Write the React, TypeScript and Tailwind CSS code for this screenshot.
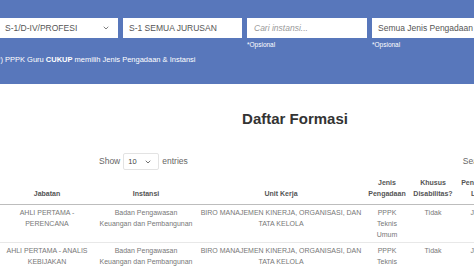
import { ChevronDown } from 'lucide-react'

const rows = [
  {
    jabatan: ['AHLI PERTAMA -', 'PERENCANA'],
    instansi: ['Badan Pengawasan', 'Keuangan dan Pembangunan'],
    unit: ['BIRO MANAJEMEN KINERJA, ORGANISASI, DAN', 'TATA KELOLA'],
    jenis: ['PPPK', 'Teknis', 'Umum'],
    khusus: 'Tidak',
    lokasi: 'Jakarta',
  },
  {
    jabatan: ['AHLI PERTAMA - ANALIS', 'KEBIJAKAN'],
    instansi: ['Badan Pengawasan', 'Keuangan dan Pembangunan'],
    unit: ['BIRO MANAJEMEN KINERJA, ORGANISASI, DAN', 'TATA KELOLA'],
    jenis: ['PPPK', 'Teknis', 'Umum'],
    khusus: 'Tidak',
    lokasi: 'Jakarta',
  },
]

function Lines({ items }: { items: string[] }) {
  return (
    <>
      {items.map((t, i) => (
        <div key={i} className="whitespace-nowrap">{t}</div>
      ))}
    </>
  )
}

export default function App() {
  return (
    <div className="w-[474px] h-[266px] overflow-hidden bg-white font-['Liberation_Sans',Arial,sans-serif]">
      {/* Filter band */}
      <div className="h-[84px] bg-[#5877bb] pt-[18px]">
        <div className="flex gap-[5px] ml-[-2px]">
          <div className="w-[120px] shrink-0">
            <div className="h-[20px] bg-white flex items-center justify-between pl-[7px] pr-[8px] text-[8.5px] text-[#555]">
              <span>S-1/D-IV/PROFESI</span>
              <ChevronDown className="w-[8px] h-[8px] text-[#666]" strokeWidth={2.5} />
            </div>
          </div>
          <div className="w-[119px] shrink-0">
            <div className="h-[20px] bg-white flex items-center pl-[6px] text-[8.5px] text-[#555]">
              S-1 SEMUA JURUSAN
            </div>
          </div>
          <div className="w-[120px] shrink-0">
            <div className="h-[20px] bg-white flex items-center pl-[7px] text-[8.5px] italic text-[#999]">
              Cari instansi...
            </div>
            <div className="text-[6.5px] leading-[11px] text-white mt-[1px]">*Opsional</div>
          </div>
          <div className="w-[120px] shrink-0">
            <div className="h-[20px] bg-white flex items-center pl-[6px] text-[8.5px] text-[#555] whitespace-nowrap">
              Semua Jenis Pengadaan
            </div>
            <div className="text-[6.5px] leading-[11px] text-white mt-[1px]">*Opsional</div>
          </div>
        </div>
        <div className="mt-[4px] ml-[-5px] text-[7.5px] leading-[11px] text-white whitespace-nowrap">
          (*) PPPK Guru <b>CUKUP</b> memilih Jenis Pengadaan &amp; Instansi
        </div>
      </div>

      <div className="w-[590px]">
        <h1 className="mt-[26px] text-center text-[15px] leading-[18px] font-bold text-[#333]">Daftar Formasi</h1>

        {/* Length + search */}
        <div className="mt-[25px] flex items-center h-[17px] text-[8.5px] text-[#666]">
          <span className="ml-[99px]">Show</span>
          <div className="ml-[3px] w-[36px] h-[17px] border border-[#e3e3e3] rounded-[2px] flex items-center justify-between pl-[4px] pr-[6px] text-[7.5px] text-[#444]">
            <span>10</span>
            <ChevronDown className="w-[8px] h-[8px] text-[#555]" strokeWidth={2.5} />
          </div>
          <span className="ml-[3px]">entries</span>
          <span className="ml-[275px]">Search:</span>
        </div>

        <table className="mt-[7px] table-fixed border-collapse w-[508px] text-[7px] leading-[11px]">
          <colgroup>
            <col className="w-[94px]" />
            <col className="w-[104px]" />
            <col className="w-[166px]" />
            <col className="w-[46px]" />
            <col className="w-[46px]" />
            <col className="w-[52px]" />
          </colgroup>
          <thead>
            <tr className="border-b border-[#bdbdbd] text-[#555] font-semibold">
              <th className="align-bottom pb-[5px] text-center font-semibold">Jabatan</th>
              <th className="align-bottom pb-[5px] text-center font-semibold">Instansi</th>
              <th className="align-bottom pb-[5px] text-center font-semibold">Unit Kerja</th>
              <th className="align-bottom pb-[5px] text-center font-semibold">
                <Lines items={['Jenis', 'Pengadaan']} />
              </th>
              <th className="align-bottom pb-[5px] text-center font-semibold">
                <Lines items={['Khusus', 'Disabilitas?']} />
              </th>
              <th className="align-bottom pb-[5px] text-center font-semibold">
                <Lines items={['Penempatan', 'Lokasi']} />
              </th>
            </tr>
          </thead>
          <tbody className="text-[#777]">
            {rows.map((r, i) => (
              <tr key={i} className="border-b border-[#e8e8e8]">
                <td className="align-top text-center pt-[2px] pb-[2px]"><Lines items={r.jabatan} /></td>
                <td className="align-top text-center pt-[2px] pb-[2px]"><Lines items={r.instansi} /></td>
                <td className="align-top text-center pt-[2px] pb-[2px]"><Lines items={r.unit} /></td>
                <td className="align-top text-center pt-[2px] pb-[2px]"><Lines items={r.jenis} /></td>
                <td className="align-top text-center pt-[2px] pb-[2px]">{r.khusus}</td>
                <td className="align-top text-center pt-[2px] pb-[2px]">{r.lokasi}</td>
              </tr>
            ))}
          </tbody>
        </table>
      </div>
    </div>
  )
}
